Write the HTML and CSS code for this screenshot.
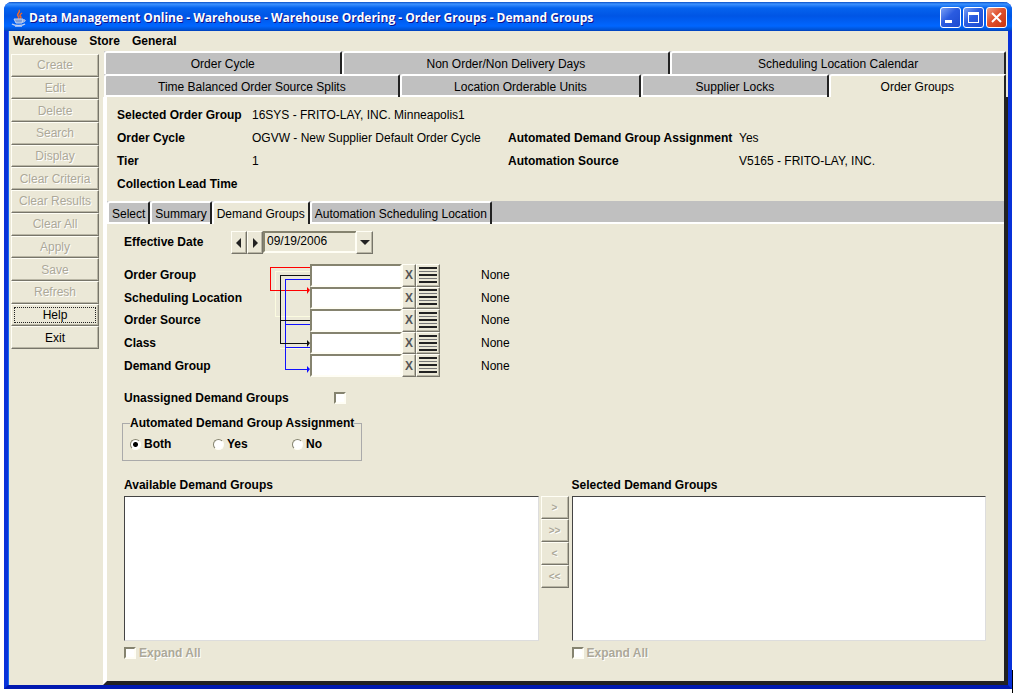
FILE: index.html
```
<!DOCTYPE html>
<html lang="en">

<head>
    <meta charset="UTF-8">
    <meta name="viewport" content="width=device-width, initial-scale=1.0">
    <title>Data Management Online</title>
    <link rel="stylesheet" href="styles.css">
</head>

<body>
    <div class="window">
        <header class="titlebar">
            <svg class="logo" width="16" height="18" viewBox="0 0 16 18" fill="none">
                <path d="M8 1c2 2-3 4-1 6 1 1 1 2 0 3M11 4c-3 2-2 3-1 4 0 1 0 1-1 2" stroke="#f0692c" stroke-width="1.5" />
                <path d="M3 10h9l-1 4H5zM12 11c4-1 2 3-1 2" fill="#7f9fd8" stroke="#c3d2f2" />
                <path d="M1 15c3 2 10 2 13 0M4 17h7" stroke="#c3d2f2" stroke-width="1.5" />
            </svg>
            <h1 class="title">Data Management Online - Warehouse - Warehouse Ordering - Order Groups - Demand Groups</h1>
            <div class="controls">
                <button type="button" class="control" aria-label="Minimize">
                    <svg width="19" height="19" viewBox="0 0 19 19"><path d="M4 12h7v3H4z" fill="#fff" /></svg>
                </button>
                <button type="button" class="control" aria-label="Maximize">
                    <svg width="19" height="19" viewBox="0 0 19 19"><path d="M4 4h11v11H4zM5 7v7h9V7z" fill="#fff" fill-rule="evenodd" /></svg>
                </button>
                <button type="button" class="control close" aria-label="Close">
                    <svg width="19" height="19" viewBox="0 0 19 19"><path d="M5 5l9 9M14 5l-9 9" stroke="#fff" stroke-width="2" /></svg>
                </button>
            </div>
        </header>

        <nav class="menu">
            <a href="#">Warehouse</a>
            <a href="#">Store</a>
            <a href="#">General</a>
        </nav>

        <div class="content">
            <aside class="sidebar">
                <button type="button" class="btn" disabled>Create</button>
                <button type="button" class="btn" disabled>Edit</button>
                <button type="button" class="btn" disabled>Delete</button>
                <button type="button" class="btn" disabled>Search</button>
                <button type="button" class="btn" disabled>Display</button>
                <button type="button" class="btn" disabled>Clear Criteria</button>
                <button type="button" class="btn" disabled>Clear Results</button>
                <button type="button" class="btn" disabled>Clear All</button>
                <button type="button" class="btn" disabled>Apply</button>
                <button type="button" class="btn" disabled>Save</button>
                <button type="button" class="btn" disabled>Refresh</button>
                <button type="button" class="btn focused">Help</button>
                <button type="button" class="btn">Exit</button>
            </aside>

            <main class="main">
                <div class="tabs tabsTop">
                    <button type="button" class="tab">Order Cycle</button>
                    <button type="button" class="tab">Non Order/Non Delivery Days</button>
                    <button type="button" class="tab">Scheduling Location Calendar</button>
                </div>
                <div class="tabs tabsBottom">
                    <button type="button" class="tab">Time Balanced Order Source Splits</button>
                    <button type="button" class="tab">Location Orderable Units</button>
                    <button type="button" class="tab">Supplier Locks</button>
                    <button type="button" class="tab active">Order Groups</button>
                </div>

                <div class="panel">
                    <div class="info">
                        <b>Selected Order Group</b><span class="wide">16SYS - FRITO-LAY, INC. Minneapolis1</span>
                        <b>Order Cycle</b><span>OGVW - New Supplier Default Order Cycle</span>
                        <b>Automated Demand Group Assignment</b><span>Yes</span>
                        <b>Tier</b><span>1</span>
                        <b>Automation Source</b><span>V5165 - FRITO-LAY, INC.</span>
                        <b>Collection Lead Time</b>
                    </div>

                    <div class="tabs subtabs">
                        <button type="button" class="tab">Select</button>
                        <button type="button" class="tab">Summary</button>
                        <button type="button" class="tab active">Demand Groups</button>
                        <button type="button" class="tab">Automation Scheduling Location</button>
                    </div>

                    <form class="form">
                        <div class="dateRow">
                            <label for="date">Effective Date</label>
                            <button type="button" class="btn arrow" aria-label="Previous day">
                                <svg width="6" height="10" viewBox="0 0 6 10"><path d="M5 0v10L0 5z" fill="#222" /></svg>
                            </button>
                            <button type="button" class="btn arrow" aria-label="Next day">
                                <svg width="6" height="10" viewBox="0 0 6 10"><path d="M1 0v10l5-5z" fill="#222" /></svg>
                            </button>
                            <div class="combo">
                                <select id="date">
                                    <option>09/19/2006</option>
                                </select>
                                <span class="btn comboArrow">
                                    <svg width="10" height="6" viewBox="0 0 10 6"><path d="M0 0h10L5 5z" fill="#222" /></svg>
                                </span>
                            </div>
                        </div>

                        <div class="criteria">
                            <svg class="links" width="42" height="113" viewBox="0 0 42 113">
                                <path d="M7 7h35v1H8v44h34v1H7zM12 84h30v1H12z" fill="#fbfbe0" />
                                <path d="M2 3h40v1H3v22h36v-3l3 3-3 4v-3H2z" fill="#f00" />
                                <path d="M17 15h25v1H18v44h24v1H18v22h24v1H18v21h21v-3l3 3-3 4v-3H17z" fill="#11f" />
                                <path d="M12 11h30v1H13v44h29v1H13v22h26v-3l3 3-3 4v-3H12z" fill="#111" />
                            </svg>
                            <label for="orderGroup">Order Group</label>
                            <input type="text" id="orderGroup">
                            <button type="button" class="btn clear" aria-label="Clear order group">X</button>
                            <button type="button" class="btn lookup" aria-label="Find order group"><i></i></button>
                            <span class="value">None</span>

                            <label for="schedulingLocation">Scheduling Location</label>
                            <input type="text" id="schedulingLocation">
                            <button type="button" class="btn clear" aria-label="Clear scheduling location">X</button>
                            <button type="button" class="btn lookup" aria-label="Find scheduling location"><i></i></button>
                            <span class="value">None</span>

                            <label for="orderSource">Order Source</label>
                            <input type="text" id="orderSource">
                            <button type="button" class="btn clear" aria-label="Clear order source">X</button>
                            <button type="button" class="btn lookup" aria-label="Find order source"><i></i></button>
                            <span class="value">None</span>

                            <label for="class">Class</label>
                            <input type="text" id="class">
                            <button type="button" class="btn clear" aria-label="Clear class">X</button>
                            <button type="button" class="btn lookup" aria-label="Find class"><i></i></button>
                            <span class="value">None</span>

                            <label for="demandGroup">Demand Group</label>
                            <input type="text" id="demandGroup">
                            <button type="button" class="btn clear" aria-label="Clear demand group">X</button>
                            <button type="button" class="btn lookup" aria-label="Find demand group"><i></i></button>
                            <span class="value">None</span>
                        </div>

                        <div class="unassigned">
                            <label for="unassigned">Unassigned Demand Groups</label>
                            <input type="checkbox" id="unassigned">
                        </div>

                        <fieldset class="assignment">
                            <legend>Automated Demand Group Assignment</legend>
                            <div class="radios">
                                <label><input type="radio" name="assignment" checked>Both</label>
                                <label><input type="radio" name="assignment">Yes</label>
                                <label><input type="radio" name="assignment">No</label>
                            </div>
                        </fieldset>

                        <div class="lists">
                            <div class="list">
                                <label for="available">Available Demand Groups</label>
                                <select id="available" multiple></select>
                                <label class="expand"><input type="checkbox" disabled>Expand All</label>
                            </div>
                            <div class="movers">
                                <button type="button" class="btn" disabled>&gt;</button>
                                <button type="button" class="btn" disabled>&gt;&gt;</button>
                                <button type="button" class="btn" disabled>&lt;</button>
                                <button type="button" class="btn" disabled>&lt;&lt;</button>
                            </div>
                            <div class="list">
                                <label for="selected">Selected Demand Groups</label>
                                <select id="selected" multiple></select>
                                <label class="expand"><input type="checkbox" disabled>Expand All</label>
                            </div>
                        </div>
                    </form>
                </div>
            </main>
        </div>
    </div>
</body>

</html>
```
FILE: styles.css
```
*,
*::after,
*::before {
    box-sizing: border-box;
}

body {
    position: relative;
    margin: 0;
    padding: 2px 5px 4px 4px;
    min-height: 100vh;
    display: flex;
    background-color: white;
    font: 12px/16px "Liberation Sans", Arial, sans-serif;
    color: black;
}

/* text caret after the window */
body::after {
    content: "";
    position: absolute;
    right: 4px;
    bottom: 0;
    width: 1px;
    height: 23px;
    background-color: black;
}

button,
input,
select {
    margin: 0;
    padding: 0;
    font: inherit;
    color: inherit;
    border-radius: 0;
}

.window {
    flex: 1;
    display: flex;
    flex-direction: column;
    border: 4px solid #0831d9;
    border-color: #0855dd #0831d9 #0019b0 #0831d9;
    border-top: 0;
    border-radius: 8px 8px 0 0;
    background-color: #ebe8d7;
    box-shadow: inset 1px 0 #166aee;
}

/* title bar */
.titlebar {
    height: 29px;
    margin: 0 -4px;
    padding: 2px 5px 0 7px;
    display: flex;
    align-items: center;
    border-radius: 8px 8px 0 0;
    background: linear-gradient(#0a50c8 0, #3d92ff 2px, #0563ee 6px, #0055e5 14px, #0066ff 24px, #0050d0 28px, #003bb5 29px);
}

.title {
    flex: 1;
    margin: 0 0 0 2px;
    font: bold 12px/16px "Open Sans", sans-serif;
    color: white;
    text-shadow: 1px 1px #0f1089;
}

.controls {
    display: flex;
    gap: 2px;
}

.control {
    width: 21px;
    height: 21px;
    border: 1px solid white;
    border-radius: 3px;
    background: linear-gradient(135deg, #7ba0f5, #2a5be0 45%, #1c4bd0);
}

.control svg {
    display: block;
}

.close {
    background: linear-gradient(135deg, #f0a088, #e0502c 45%, #c83510);
}

.menu {
    height: 20px;
    padding: 2px 5px;
    display: flex;
    gap: 12px;
    font-weight: bold;
}

.menu a {
    color: inherit;
    text-decoration: none;
}

.content {
    flex: 1;
    display: flex;
}

/* raised buttons */
.btn {
    display: flex;
    align-items: center;
    justify-content: center;
    border: 1px solid;
    border-color: #fffef5 #77756a #77756a #fffef5;
    box-shadow: inset -1px -1px #b9b6a5;
    background-color: #ebe8d7;
}

.btn:disabled {
    color: #aca899;
    text-shadow: 1px 1px white;
}

.sidebar {
    width: 92px;
    height: 298px;
    padding: 3px 1px 0 3px;
    display: grid;
    grid-template-rows: repeat(13, 1fr);
}

.focused {
    outline: 1px dotted #222;
    outline-offset: -4px;
}

.main {
    flex: 1;
    margin-left: 3px;
    display: flex;
    flex-direction: column;
}

/* tabs */
.tabs {
    display: grid;
    background-color: #c0c0c0;
}

.tabsTop,
.tabsBottom {
    margin: 0 2px 0 1px;
    height: 23px;
}

.tabsTop {
    grid-template-columns: 237fr 328fr 335fr;
}

.tabsBottom {
    grid-template-columns: 295fr 241fr 187fr 177fr;
}

.tab {
    border: 0 solid white;
    border-width: 2px 2px 0 2px;
    border-right-color: #222;
    border-radius: 3px 2px 0 0;
    background-color: #c0c0c0;
    white-space: nowrap;
}

.tabsTop .tab,
.tabsBottom .tab {
    padding-top: 1px;
}

.tabsBottom .tab,
.subtabs .tab {
    box-shadow: 0 -2px white inset;
}

.tab.active,
.subtabs .tab.active {
    background-color: #ebe8d7;
    box-shadow: none;
}

.panel {
    flex: 1;
    display: flex;
    flex-direction: column;
    border: solid;
    border-width: 0 4px 4px 4px;
    border-color: white #222 #222 white;
}

.info {
    height: 104px;
    padding: 7px 10px;
    display: grid;
    grid-template-columns: 135px 256px 231px 1fr;
    grid-auto-rows: 23px;
    align-content: start;
    line-height: 23px;
}

.info .wide {
    grid-column: span 3;
}

.subtabs {
    height: 23px;
    display: flex;
    box-shadow: 0 -2px white inset;
}

.subtabs .tab {
    padding: 0 3px;
}

.form {
    flex: 1;
    display: flex;
    flex-direction: column;
    padding: 7px 18px 20px 17px;
    font-weight: bold;
}

.dateRow {
    height: 23px;
    display: flex;
}

.dateRow label {
    width: 107px;
    line-height: 23px;
}

.arrow {
    width: 16px;
}

.combo {
    position: relative;
    width: 110px;
}

.combo select {
    width: 94px;
    height: 22px;
    padding: 0 0 2px 2px;
    appearance: none;
    border: 2px solid;
    border-color: #85836f #fffef5 #fffef5 #85836f;
    background-color: #ebe8d7;
    font-weight: normal;
}

.comboArrow {
    position: absolute;
    top: 0;
    right: 0;
    width: 17px;
    height: 23px;
    pointer-events: none;
}

/* search criteria */
.criteria {
    height: 113px;
    margin-top: 10px;
    display: grid;
    grid-template-columns: 144px 42px 92px 14px 24px 1fr;
    grid-template-rows: repeat(5, 1fr);
    align-items: center;
}

.links {
    grid-column: 2;
    grid-row: 1 / span 5;
}

.criteria label {
    grid-column: 1;
}

.criteria input {
    grid-column: 3;
    width: 100%;
    height: 100%;
    border: 2px solid;
    border-color: #85836f #fffef5 #fffef5 #85836f;
    background-color: white;
}

.criteria .btn {
    height: 100%;
}

.clear {
    color: #555;
}

.lookup i {
    width: 18px;
    height: 17px;
    background: repeating-linear-gradient(#222 0 2px, transparent 2px 4px, #777 4px 5px, transparent 5px 7px);
}

.value {
    padding-left: 41px;
    font-weight: normal;
}

input[type="checkbox"] {
    width: 12px;
    height: 12px;
    appearance: none;
    border: 2px solid;
    border-color: #85836f #fffef5 #fffef5 #85836f;
    background-color: white;
}

.unassigned {
    margin-top: 13px;
    display: flex;
    align-items: center;
}

.unassigned label {
    width: 210px;
}

.assignment {
    width: 240px;
    height: 46px;
    margin: 9px 0 0 -2px;
    padding: 0 7px;
    border: 1px solid #aaa;
}

.assignment legend {
    padding: 0;
    white-space: nowrap;
}

.radios {
    display: grid;
    grid-template-columns: 83px 79px 1fr;
    padding-top: 5px;
}

.radios label {
    display: flex;
    align-items: center;
    gap: 3px;
}

.radios input {
    width: 11px;
    height: 11px;
    appearance: none;
    border: 1px solid;
    border-color: #85836f #fffef5 #fffef5 #85836f;
    border-radius: 50%;
    background-color: white;
}

.radios input:checked {
    background-image: radial-gradient(circle, #000 2px, transparent 3px);
}

/* demand group lists */
.lists {
    flex: 1;
    margin-top: 16px;
    display: flex;
}

.list {
    flex: 1;
    display: flex;
    flex-direction: column;
}

.list select {
    flex: 1;
    min-height: 60px;
    margin-top: 3px;
    border: 1px solid;
    border-color: #444 #ddd #ddd #444;
    background-color: white;
}

.list .expand {
    margin-top: 4px;
    display: flex;
    align-items: center;
    gap: 3px;
    color: #aca899;
    text-shadow: 1px 1px white;
}

.movers {
    width: 28px;
    margin: 19px 3px 0 2px;
    display: grid;
    grid-auto-rows: 23px;
    align-content: start;
}

.movers .btn {
    font-size: 10px;
}
```
